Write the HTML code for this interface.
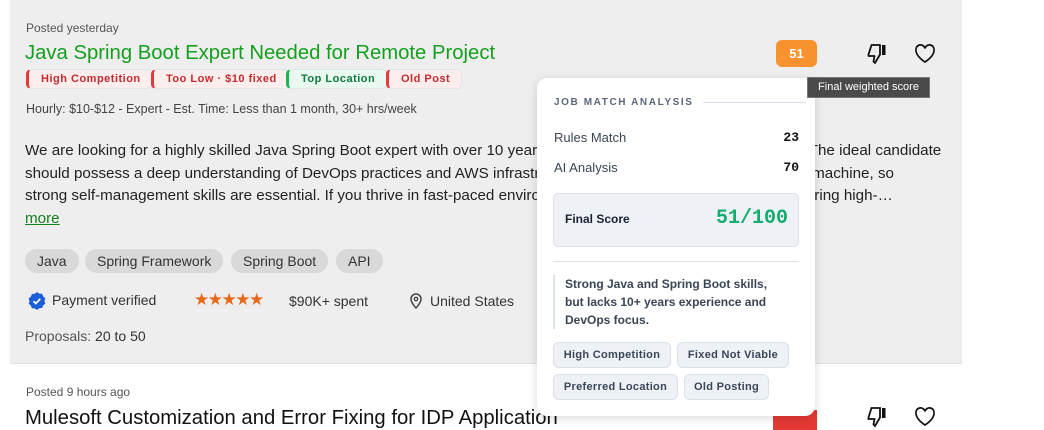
<!DOCTYPE html>
<html><head><meta charset="utf-8"><style>
*{box-sizing:border-box;margin:0;padding:0}
body{width:1044px;height:423px;overflow:hidden;background:#fff;font-family:"Liberation Sans",sans-serif;position:relative}
.card{position:absolute;left:10px;top:0;width:952px;height:364px;background:#eeeeee;border-bottom:1px solid #e2e2e2}
.abs{position:absolute;white-space:nowrap}
.tag{position:absolute;top:69px;height:20px;border-radius:5px;font-size:11px;font-weight:bold;letter-spacing:.5px;line-height:18px;padding:0 11px 0 12px;border:1px solid #dfe3ea;border-left:3px solid #e5393d;background:#fdeeee;color:#c62a2f;white-space:nowrap}
.tag.g{border-left-color:#16b556;background:#e9f9ef;color:#0d7a3e}
.skill{position:absolute;top:249px;height:24px;border-radius:12px;background:#d9d9d9;color:#333;font-size:14px;line-height:24px;padding:0 12px;white-space:nowrap}
.pop{position:absolute;left:537px;top:78px;width:278px;height:338px;background:#fff;border-radius:10px;box-shadow:0 2px 10px rgba(0,0,0,.15)}
.pill{position:absolute;height:26px;border-radius:6px;background:#eef2f7;border:1px solid #d9e0ea;color:#3b4556;font-size:11px;font-weight:bold;letter-spacing:.3px;line-height:24px;text-align:center;white-space:nowrap}
</style></head><body>
<div class="card"></div>
<div class="abs" style="left:26px;top:21px;font-size:12px;color:#555">Posted yesterday</div>
<div class="abs" style="left:25px;top:42px;font-size:20.3px;color:#14a01e">Java Spring Boot Expert Needed for Remote Project</div>
<div class="tag" style="left:26px">High Competition</div>
<div class="tag" style="left:151px">Too Low · $10 fixed</div>
<div class="tag g" style="left:286px">Top Location</div>
<div class="tag" style="left:386px">Old Post</div>
<div class="abs" style="left:26px;top:102px;font-size:12.5px;color:#444">Hourly: $10-$12 - Expert - Est. Time: Less than 1 month, 30+ hrs/week</div>
<div class="abs" style="left:25px;top:140px;font-size:15.2px;line-height:22.7px;color:#222">We are looking for a highly skilled Java Spring Boot expert with over 10 years of experience to join our remote team. The ideal candidate<br>should possess a deep understanding of DevOps practices and AWS infrastructure, and be able to work on a remote machine, so<br>strong self-management skills are essential. If you thrive in fast-paced environments and have a track record of delivering high-…<br><span style="color:#14801e;text-decoration:underline">more</span></div>
<div class="skill" style="left:25px">Java</div>
<div class="skill" style="left:85px">Spring Framework</div>
<div class="skill" style="left:231px">Spring Boot</div>
<div class="skill" style="left:336px">API</div>
<svg class="abs" style="left:27px;top:291px" width="20" height="20" viewBox="0 0 20 20"><path d="M10 1l2.3 1.6 2.8.2 1 2.6 2.2 1.8-.8 2.7.8 2.7-2.2 1.8-1 2.6-2.8.2L10 19l-2.3-1.6-2.8-.2-1-2.6-2.2-1.8.8-2.7-.8-2.7 2.2-1.8 1-2.6 2.8-.2z" fill="#1a5fd8"/><path d="M6.5 10.2l2.3 2.3 4.5-4.6" stroke="#fff" stroke-width="1.8" fill="none"/></svg>
<div class="abs" style="left:52px;top:292px;font-size:14px;color:#333">Payment verified</div>
<div class="abs" style="left:194px;top:290px;font-size:17px;color:#e8681a;letter-spacing:-1.5px">★★★★★</div>
<div class="abs" style="left:289px;top:293px;font-size:14px;color:#333">$90K+ spent</div>
<svg class="abs" style="left:409px;top:293px" width="14" height="16" viewBox="0 0 14 16"><path d="M7 15s5-5 5-9a5 5 0 0 0-10 0c0 4 5 9 5 9z" fill="none" stroke="#444" stroke-width="1.5"/><circle cx="7" cy="6" r="1.7" fill="none" stroke="#444" stroke-width="1.3"/></svg>
<div class="abs" style="left:430px;top:293px;font-size:14px;color:#333">United States</div>
<div class="abs" style="left:25px;top:328px;font-size:14px;color:#555">Proposals: <span style="color:#333">20 to 50</span></div>
<div class="abs" style="left:26px;top:385px;font-size:12px;color:#555">Posted 9 hours ago</div>
<div class="abs" style="left:25px;top:407px;font-size:20.3px;color:#111">Mulesoft Customization and Error Fixing for IDP Application</div>
<div class="abs" style="left:773px;top:410px;width:44px;height:20px;background:#e53935"></div>
<div class="abs" style="left:776px;top:40px;width:41px;height:27px;border-radius:6px;background:#f7932e;color:#fff;font-weight:bold;font-size:13px;text-align:center;line-height:27px">51</div>
<svg class="abs" style="left:865px;top:42px" width="24" height="24" viewBox="0 0 24 24"><path d="M15 3H6.5L3.5 12.5V14h6l-1 5.5 1.5 1.5 5-8.5V3z" fill="none" stroke="#111" stroke-width="1.8" stroke-linejoin="round"/><rect x="17" y="3" width="3.5" height="10" fill="#111"/></svg>
<svg class="abs" style="left:913px;top:43px" width="24" height="22" viewBox="0 0 24 22"><path d="M12 19S3 13.5 3 7.5A4.5 4.5 0 0 1 12 5.5 4.5 4.5 0 0 1 21 7.5C21 13.5 12 19 12 19z" fill="none" stroke="#111" stroke-width="1.7"/></svg>
<svg class="abs" style="left:865px;top:405px" width="24" height="24" viewBox="0 0 24 24"><path d="M15 3H6.5L3.5 12.5V14h6l-1 5.5 1.5 1.5 5-8.5V3z" fill="none" stroke="#111" stroke-width="1.8"/><rect x="17" y="3" width="3.5" height="10" fill="#111"/></svg>
<svg class="abs" style="left:913px;top:406px" width="24" height="22" viewBox="0 0 24 22"><path d="M12 19S3 13.5 3 7.5A4.5 4.5 0 0 1 12 5.5 4.5 4.5 0 0 1 21 7.5C21 13.5 12 19 12 19z" fill="none" stroke="#111" stroke-width="1.7"/></svg>
<div class="pop">
<div class="abs" style="left:17px;top:19px;font-size:10px;font-weight:bold;letter-spacing:1.6px;color:#5a6678">JOB MATCH ANALYSIS</div>
<div class="abs" style="left:166px;top:24px;width:103px;height:1px;background:#d9e0ea"></div>
<div class="abs" style="left:17px;top:52px;font-size:13px;color:#3b4556">Rules Match</div>
<div class="abs" style="right:16px;top:52px;font-size:13px;font-weight:bold;font-family:'Liberation Mono',monospace;color:#111">23</div>
<div class="abs" style="left:17px;top:82px;font-size:13px;color:#3b4556">AI Analysis</div>
<div class="abs" style="right:16px;top:82px;font-size:13px;font-weight:bold;font-family:'Liberation Mono',monospace;color:#111">70</div>
<div class="abs" style="left:16px;top:115px;width:246px;height:54px;border-radius:6px;background:#eef2f7;border:1px solid #d9e0ea"></div>
<div class="abs" style="left:28px;top:134px;font-size:12px;font-weight:bold;color:#1b2232">Final Score</div>
<div class="abs" style="right:27px;top:129px;font-size:20px;font-weight:bold;font-family:'Liberation Mono',monospace;color:#13ad6e">51/100</div>
<div class="abs" style="left:16px;top:183px;width:246px;height:1px;background:#dde2ea"></div>
<div class="abs" style="left:16px;top:197px;width:2px;height:54px;background:#dde2ea"></div>
<div class="abs" style="left:28px;top:197px;font-size:12px;font-weight:bold;line-height:18px;color:#3b4556">Strong Java and Spring Boot skills,<br>but lacks 10+ years experience and<br>DevOps focus.</div>
<div class="pill" style="left:16px;top:264px;width:118px">High Competition</div>
<div class="pill" style="left:140px;top:264px;width:112px">Fixed Not Viable</div>
<div class="pill" style="left:16px;top:296px;width:125px">Preferred Location</div>
<div class="pill" style="left:147px;top:296px;width:85px">Old Posting</div>
</div>
<div class="abs" style="left:807px;top:77px;width:123px;height:21px;background:#4a4a4a;border:1px solid #777;color:#fff;font-size:11px;line-height:19px;text-align:center">Final weighted score</div>
</body></html>
